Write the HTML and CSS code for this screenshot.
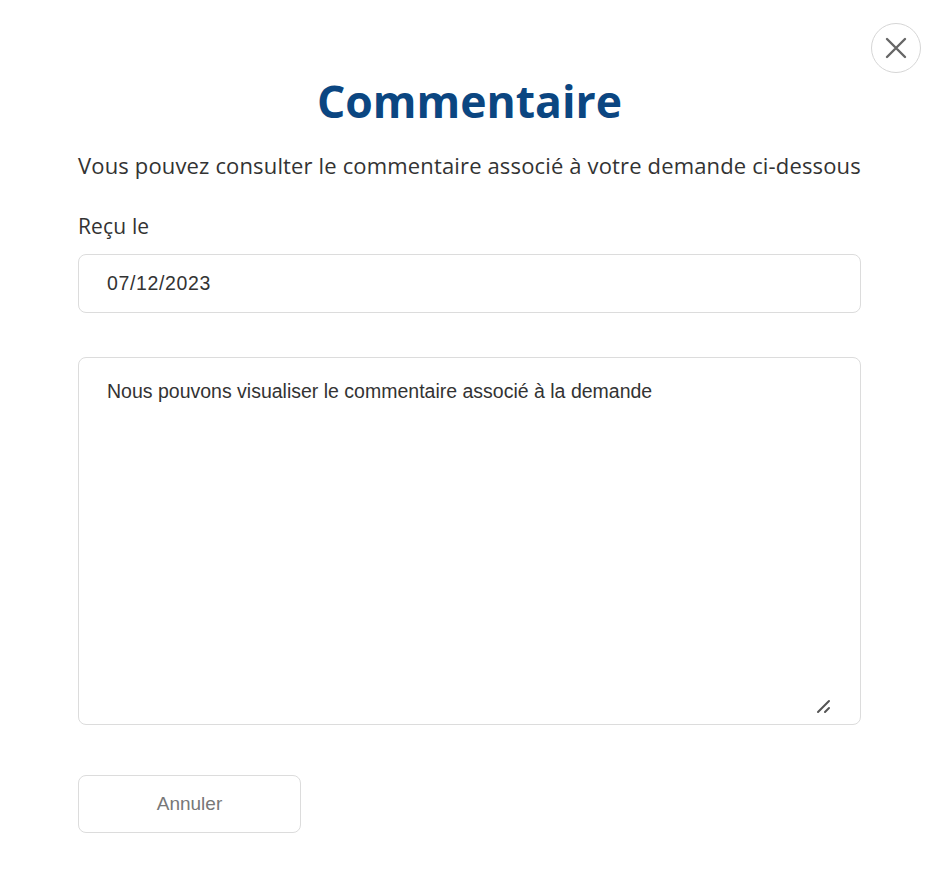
FILE: index.html
```html
<!DOCTYPE html>
<html lang="fr">
<head>
<meta charset="utf-8">
<link rel="stylesheet" href="styles.css">
</head>
<body>
<div class="modal">
  <button class="close" aria-label="Fermer">
    <svg width="24" height="24" viewBox="0 0 24 24"><path d="M3 3L21 21M21 3L3 21" stroke="#666" stroke-width="2.4" stroke-linecap="round"/></svg>
  </button>
  <h1 class="title">Commentaire</h1>
  <p class="intro">Vous pouvez consulter le commentaire associé à votre demande ci-dessous</p>
  <label class="label">Reçu le</label>
  <div class="field">07/12/2023</div>
  <div class="comment-wrap">
    <textarea class="comment" readonly>Nous pouvons visualiser le commentaire associé à la demande</textarea>
    <svg class="grip" width="16" height="16" viewBox="0 0 16 16"><path d="M2 14L13 3M9 14L13 10" stroke="#555" stroke-width="2" stroke-linecap="round"/></svg>
  </div>
  <div class="actions">
    <button class="btn">Annuler</button>
  </div>
</div>
</body>
</html>
```
FILE: styles.css
```css
html, body {
  margin: 0;
  padding: 0;
  background: #fff;
}
.modal {
  position: relative;
  width: 783px;
  padding: 70px 0 0 78px;
  display: flex;
  flex-direction: column;
  font-family: "Open Sans", sans-serif;
  color: #333;
}
.close {
  position: absolute;
  left: 871px;
  top: 23px;
  width: 50px;
  height: 50px;
  border-radius: 50%;
  border: 1px solid #d6d6d6;
  background: #fff;
  display: flex;
  align-items: center;
  justify-content: center;
  padding: 0;
}
.title {
  margin: 0;
  text-align: center;
  font-size: 44.5px;
  font-weight: 700;
  line-height: 62px;
  color: #0b4681;
}
.intro {
  margin: 19px 0 0;
  font-size: 22px;
  letter-spacing: 0.15px;
  line-height: 28px;
}
.label {
  margin-top: 33px;
  font-size: 21px;
  letter-spacing: 0.15px;
  line-height: 28px;
}
.field {
  margin-top: 14px;
  height: 57px;
  border: 1px solid #dcdcdc;
  border-radius: 8px;
  padding: 0 28px;
  display: flex;
  align-items: center;
  font-family: "Liberation Sans", Arial, sans-serif;
  font-size: 19.5px;
  letter-spacing: 0.65px;
  color: #333;
}
.comment-wrap {
  position: relative;
  margin-top: 44px;
  display: flex;
}
.comment {
  flex: 1;
  height: 368px;
  border: 1px solid #dcdcdc;
  border-radius: 8px;
  padding: 21px 28px;
  box-sizing: border-box;
  font-family: "Liberation Sans", Arial, sans-serif;
  font-size: 19.5px;
  line-height: 24px;
  color: #333;
  resize: none;
  outline: none;
}
.grip {
  position: absolute;
  right: 29px;
  bottom: 11px;
}
.actions {
  margin-top: 50px;
  display: flex;
}
.btn {
  width: 223px;
  height: 58px;
  border: 1px solid #dcdcdc;
  border-radius: 8px;
  background: #fff;
  font-family: "Liberation Sans", Arial, sans-serif;
  font-size: 19px;
  color: #777;
}
```
